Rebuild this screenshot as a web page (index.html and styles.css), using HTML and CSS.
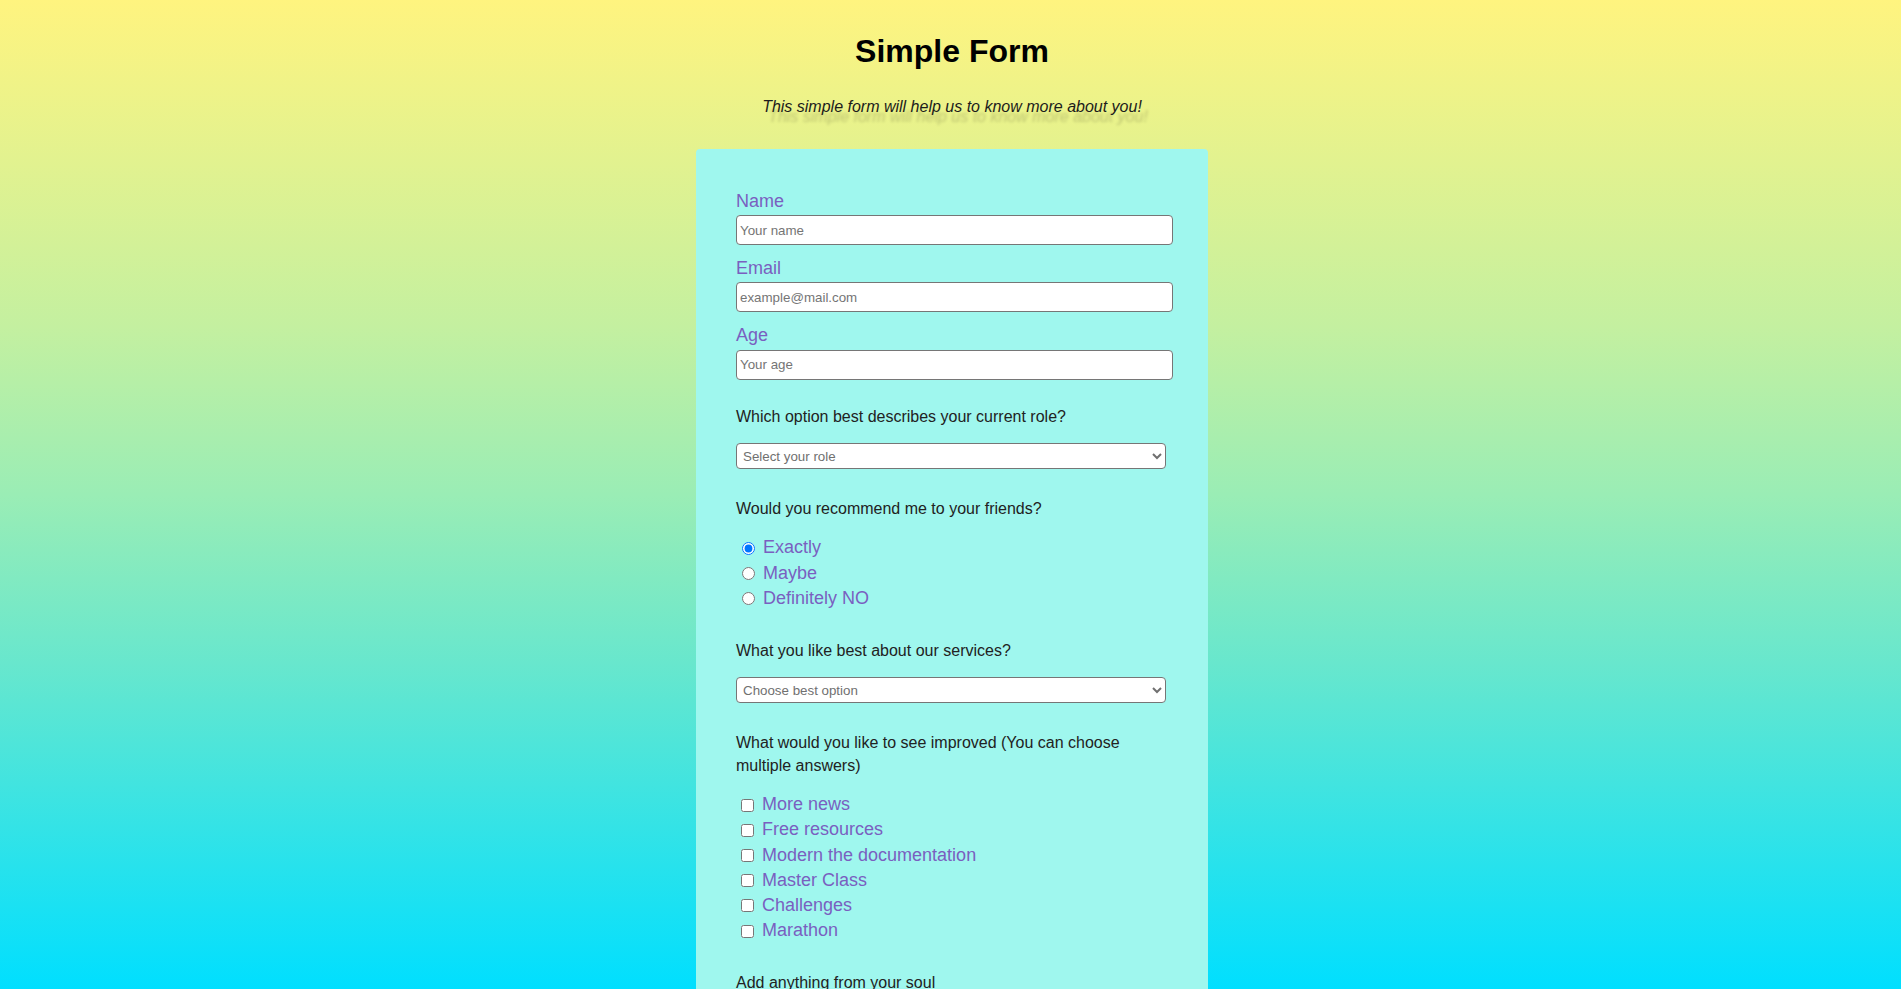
FILE: index.html
```html
<!DOCTYPE html>
<html lang="en">
<head>
<meta charset="utf-8">
<title>Simple Form</title>
<link rel="stylesheet" href="styles.css">
</head>
<body>
<header class="header">
  <h1 class="title" id="title">Simple Form</h1>
  <p class="description" id="description">This simple form will help us to know more about you!</p>
</header>
<form class="card" id="survey-form">
  <div class="fields">
    <div class="field">
      <label class="label" for="name">Name</label>
      <input class="text-input" id="name" type="text" placeholder="Your name">
    </div>
    <div class="field">
      <label class="label" for="email">Email</label>
      <input class="text-input" id="email" type="email" placeholder="example@mail.com">
    </div>
    <div class="field">
      <label class="label" for="age">Age</label>
      <input class="text-input" id="age" type="number" placeholder="Your age">
    </div>
  </div>

  <div class="group">
    <p class="question">Which option best describes your current role?</p>
    <select class="dropdown" id="role">
      <option disabled selected>Select your role</option>
      <option>Student</option>
      <option>Full Time Job</option>
      <option>Prefer not to say</option>
    </select>
  </div>

  <div class="group">
    <p class="question">Would you recommend me to your friends?</p>
    <div class="options">
      <div class="option"><input class="radio" type="radio" name="recommend" id="rec1" checked><label class="option-label" for="rec1">Exactly</label></div>
      <div class="option"><input class="radio" type="radio" name="recommend" id="rec2"><label class="option-label" for="rec2">Maybe</label></div>
      <div class="option"><input class="radio" type="radio" name="recommend" id="rec3"><label class="option-label" for="rec3">Definitely NO</label></div>
    </div>
  </div>

  <div class="group">
    <p class="question">What you like best about our services?</p>
    <select class="dropdown" id="best">
      <option disabled selected>Choose best option</option>
      <option>Challenges</option>
      <option>Projects</option>
      <option>Community</option>
    </select>
  </div>

  <div class="group">
    <p class="question">What would you like to see improved (You can choose multiple answers)</p>
    <div class="options">
      <div class="option"><input class="checkbox" type="checkbox" id="imp1"><label class="option-label" for="imp1">More news</label></div>
      <div class="option"><input class="checkbox" type="checkbox" id="imp2"><label class="option-label" for="imp2">Free resources</label></div>
      <div class="option"><input class="checkbox" type="checkbox" id="imp3"><label class="option-label" for="imp3">Modern the documentation</label></div>
      <div class="option"><input class="checkbox" type="checkbox" id="imp4"><label class="option-label" for="imp4">Master Class</label></div>
      <div class="option"><input class="checkbox" type="checkbox" id="imp5"><label class="option-label" for="imp5">Challenges</label></div>
      <div class="option"><input class="checkbox" type="checkbox" id="imp6"><label class="option-label" for="imp6">Marathon</label></div>
    </div>
  </div>

  <div class="group">
    <p class="question">Add anything from your soul</p>
    <textarea class="comment" placeholder="Enter your comment here..."></textarea>
  </div>

  <button class="submit" type="submit">Submit</button>
</form>
</body>
</html>
```

FILE: styles.css
```css
body {
  margin: 8px 5px 8px 8px;
  font-family: "Liberation Sans", Arial, sans-serif;
  font-size: 16px;
  line-height: 1.4;
  color: #222;
  background: linear-gradient(180deg, #fff47f 0%, #c4f0a0 33%, #9aedb5 50%, #68e7cd 67%, #00dfff 100%) fixed;
}

.header {
  text-align: center;
}

.title {
  margin: 21.44px 0;
  font-size: 32px;
  font-weight: bold;
  color: #000;
}

.description {
  margin: 0;
  font-style: italic;
  color: #1c1c1c;
  text-shadow: 6px 10px 3px rgba(0, 0, 0, 0.18);
}

.card {
  width: 437px;
  margin: 31px auto 0;
  padding: 40px 35px 40px 40px;
  background: #9ff7ee;
  border-radius: 4px;
}

.fields {
  margin-bottom: 26px;
}

.field {
  margin-bottom: 11px;
}

.label {
  display: block;
  margin-bottom: 1px;
  font-size: 18px;
  color: #7a5fc0;
}

.text-input {
  display: block;
  box-sizing: border-box;
  width: 100%;
  height: 30px;
  margin: 0;
  padding: 0 3px;
  border: 1px solid #767676;
  border-radius: 4px;
  background: #fff;
  font-family: "Liberation Sans", Arial, sans-serif;
  font-size: 13.33px;
  color: #222;
}

.text-input::placeholder {
  color: #757575;
}

.group {
  margin-bottom: 29px;
}

.question {
  margin: 0 0 15px;
  color: #222;
}

.dropdown {
  display: block;
  box-sizing: border-box;
  width: 430px;
  height: 26px;
  margin: 7.5px 0 0;
  padding: 0 2px;
  border: 1px solid #767676;
  border-radius: 4px;
  background-color: #fff;
  font-family: "Liberation Sans", Arial, sans-serif;
  font-size: 13.33px;
  color: #707070;
}

.options {
  display: flex;
  flex-direction: column;
}

.option {
  display: flex;
  align-items: center;
  height: 25.2px;
}

.radio {
  width: 13px;
  height: 13px;
  margin: 1px 0 0 6px;
}

.checkbox {
  width: 13px;
  height: 13px;
  margin: 1px 0 0 5px;
}

.option-label {
  margin-left: 8px;
  font-size: 18px;
  color: #7a5fc0;
}

.comment {
  display: block;
  box-sizing: border-box;
  width: 100%;
  height: 90px;
  margin-top: 7.5px;
  padding: 4px;
  border: 1px solid #767676;
  border-radius: 4px;
  font-family: "Liberation Sans", Arial, sans-serif;
  font-size: 13.33px;
}

.submit {
  display: block;
  width: 100%;
  padding: 10px;
  border: none;
  border-radius: 4px;
  background: #7a5fc0;
  color: #fff;
  font-family: "Liberation Sans", Arial, sans-serif;
  font-size: 16px;
}
```
